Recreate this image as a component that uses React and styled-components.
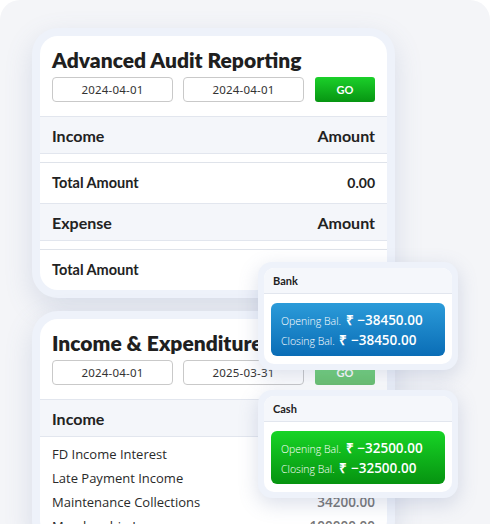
import React from 'react';
import styled, { createGlobalStyle } from 'styled-components';

const GlobalStyle = createGlobalStyle`
  * { box-sizing: border-box; margin: 0; padding: 0; }
  body { background: #fff; font-family: 'Lato', sans-serif; }
`;

const Frame = styled.div`
  position: relative;
  width: 490px;
  height: 524px;
  overflow: hidden;
  background: #f4f5f8;
  border-radius: 20px 20px 0 0;
  padding: 28px 0 0 32px;
  display: flex;
  flex-direction: column;
  gap: 13px;
`;

const Ring = styled.div`
  width: 363px;
  padding: 8px;
  border-radius: 26px;
  background: #eef2fa;
  box-shadow: 0 10px 28px rgba(90, 110, 160, 0.18);
  flex-shrink: 0;
`;

const Card = styled.div`
  background: #fff;
  border-radius: 18px;
  overflow: hidden;
  padding-top: 11px;
`;

const Title = styled.h1`
  font-family: 'Lato', sans-serif;
  font-weight: 800;
  font-size: 21px;
  color: #1f1f1f;
  padding: 0 12px;
  line-height: 26px;
  white-space: nowrap;
`;

const Filters = styled.div`
  display: flex;
  gap: 10px;
  padding: 4px 12px 14px;
  align-items: center;
`;

const DateBox = styled.div`
  width: 121px;
  height: 25px;
  border: 1px solid #c9c9c9;
  border-radius: 4px;
  display: flex;
  align-items: center;
  justify-content: center;
  font-family: 'Noto Sans', sans-serif;
  font-size: 11.5px;
  color: #333;
  letter-spacing: 0.2px;
`;

const GoButton = styled.button`
  margin-left: 1px;
  width: 60px;
  height: 25px;
  border: none;
  border-radius: 3px;
  background: linear-gradient(#1bd02a, #079512);
  color: #fff;
  font-family: 'Lato', sans-serif;
  font-weight: 700;
  font-size: 11px;
  opacity: ${p => (p.$faded ? 0.6 : 1)};
`;

const HeadRow = styled.div`
  display: flex;
  justify-content: space-between;
  align-items: center;
  height: 38px;
  padding: 0 12px;
  background: #f4f6fa;
  border-top: 1px solid #e2e6ee;
  border-bottom: 1px solid #e2e6ee;
  font-family: 'Lato', sans-serif;
  font-weight: 700;
  font-size: 16px;
  color: #222;
`;

const Spacer = styled.div`
  height: 9px;
  border-bottom: 1px solid #dfe3ea;
`;

const TotalRow = styled.div`
  display: flex;
  justify-content: space-between;
  align-items: center;
  height: 40px;
  padding: 0 12px 1px;
  font-family: 'Lato', sans-serif;
  font-weight: 700;
  font-size: 14.5px;
  color: #222;
  span:last-child { font-size: 14px; }
`;

const ItemList = styled.div`
  padding: 5px 12px 0;
  display: flex;
  flex-direction: column;
`;

const Item = styled.div`
  display: flex;
  justify-content: space-between;
  align-items: center;
  height: 24px;
  font-family: 'Open Sans', sans-serif;
  font-size: 13px;
  color: #2a2a2a;
  span:last-child { color: #777; font-weight: 600; font-size: 13.5px; }
`;

const Panel = styled.div`
  position: absolute;
  left: 258px;
  top: ${p => p.$top}px;
  width: 200px;
  padding: 6px;
  border-radius: 14px;
  background: #eef2fa;
  box-shadow: 0 6px 20px rgba(90, 110, 160, 0.22);
`;

const PanelInner = styled.div`
  background: #fff;
  border-radius: 10px;
  overflow: hidden;
  padding-bottom: 8px;
`;

const PanelHead = styled.div`
  height: 26px;
  background: #f5f7fb;
  border-bottom: 1px solid #e2e6ee;
  display: flex;
  align-items: center;
  padding: 0 9px;
  font-family: 'Lato', sans-serif;
  font-weight: 700;
  font-size: 11px;
  color: #222;
`;

const Balance = styled.div`
  margin: 9px 7px 0;
  height: 53px;
  border-radius: 6px;
  background: ${p => p.$bg};
  padding: 7px 10px;
  display: flex;
  flex-direction: column;
  justify-content: center;
  gap: 2px;
  color: #fff;
`;

const BalLine = styled.div`
  font-family: 'Open Sans', sans-serif;
  font-size: 10.5px;
  font-weight: 300;
  white-space: nowrap;
  b { font-weight: 600; font-size: 13.5px; margin-left: 2px; }
`;

function BalancePanel({ top, label, bg, amount }) {
  return (
    <Panel $top={top}>
      <PanelInner>
        <PanelHead>{label}</PanelHead>
        <Balance $bg={bg}>
          <BalLine>Opening Bal. <b>₹ −{amount}</b></BalLine>
          <BalLine>Closing Bal. <b>₹ −{amount}</b></BalLine>
        </Balance>
      </PanelInner>
    </Panel>
  );
}

const incomeItems = [
  ['FD Income Interest', '1200.00'],
  ['Late Payment Income', '3050.00'],
  ['Maintenance Collections', '34200.00'],
  ['Membership Income', '100000.00'],
];

export default function App() {
  return (
    <>
      <GlobalStyle />
      <Frame>
        <Ring>
          <Card>
            <Title>Advanced Audit Reporting</Title>
            <Filters>
              <DateBox>2024-04-01</DateBox>
              <DateBox>2024-04-01</DateBox>
              <GoButton>GO</GoButton>
            </Filters>
            <HeadRow><span>Income</span><span>Amount</span></HeadRow>
            <Spacer />
            <TotalRow><span>Total Amount</span><span>0.00</span></TotalRow>
            <HeadRow><span>Expense</span><span>Amount</span></HeadRow>
            <Spacer />
            <TotalRow><span>Total Amount</span><span>0.00</span></TotalRow>
          </Card>
        </Ring>
        <Ring>
          <Card>
            <Title>Income &amp; Expenditure</Title>
            <Filters>
              <DateBox>2024-04-01</DateBox>
              <DateBox>2025-03-31</DateBox>
              <GoButton $faded>GO</GoButton>
            </Filters>
            <HeadRow><span>Income</span><span>Amount</span></HeadRow>
            <ItemList>
              {incomeItems.map(([name, value]) => (
                <Item key={name}><span>{name}</span><span>{value}</span></Item>
              ))}
            </ItemList>
          </Card>
        </Ring>
        <BalancePanel top={262} label="Bank" bg="linear-gradient(#2b9bd9, #0a6db6)" amount="38450.00" />
        <BalancePanel top={390} label="Cash" bg="linear-gradient(#17d426, #069310)" amount="32500.00" />
      </Frame>
    </>
  );
}
